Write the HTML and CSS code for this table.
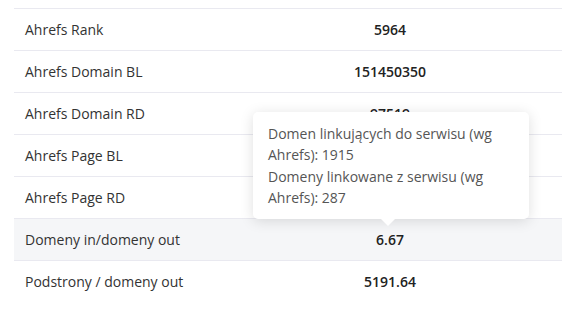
FILE: index.html
```html
<!DOCTYPE html>
<html lang="pl">
<head>
<meta charset="utf-8">
<link rel="stylesheet" href="styles.css">
</head>
<body>
<div class="table">
  <div class="row"><div class="label">Ahrefs Rank</div><div class="value">5964</div></div>
  <div class="row"><div class="label">Ahrefs Domain BL</div><div class="value">151450350</div></div>
  <div class="row"><div class="label">Ahrefs Domain RD</div><div class="value">97519</div></div>
  <div class="row"><div class="label">Ahrefs Page BL</div><div class="value">&nbsp;</div></div>
  <div class="row"><div class="label">Ahrefs Page RD</div><div class="value">&nbsp;</div></div>
  <div class="row hl"><div class="label">Domeny in/domeny out</div><div class="value">6.67</div></div>
  <div class="row"><div class="label">Podstrony / domeny out</div><div class="value">5191.64</div></div>
  <div class="tooltip">
    Domen linkujących do serwisu (wg Ahrefs): 1915<br>
    Domeny linkowane z serwisu (wg Ahrefs): 287
  </div>
</div>
</body>
</html>
```
FILE: styles.css
```css
html, body { margin: 0; padding: 0; background: #fff; overflow: hidden; }
body {
  font-family: "Open Sans", "Noto Sans", sans-serif;
  font-size: 14px;
  color: #333;
  padding: 8px 0 0 14px;
}
.table { position: relative; width: 548px; }
.row {
  display: grid;
  grid-template-columns: 204px 1fr;
  height: 41px;
  align-items: center;
  border-top: 1px solid #e9e9f0;
}
.row.hl { background: #f5f6f8; }
.label { padding-left: 11px; color: #333; }
.value { text-align: center; font-weight: 600; color: #222; }
.tooltip {
  position: absolute;
  left: 239px;
  top: 104px;
  width: 246px;
  padding: 11px 15px 11px 15px;
  background: #fff;
  border-radius: 5px;
  box-shadow: 0 2px 14px rgba(0,0,0,0.13);
  color: #555;
  line-height: 21.3px;
  font-size: 14px;
}
.tooltip::after {
  content: "";
  position: absolute;
  left: 128px;
  bottom: -7px;
  border-left: 7px solid transparent;
  border-right: 7px solid transparent;
  border-top: 7px solid #fff;
}
```
